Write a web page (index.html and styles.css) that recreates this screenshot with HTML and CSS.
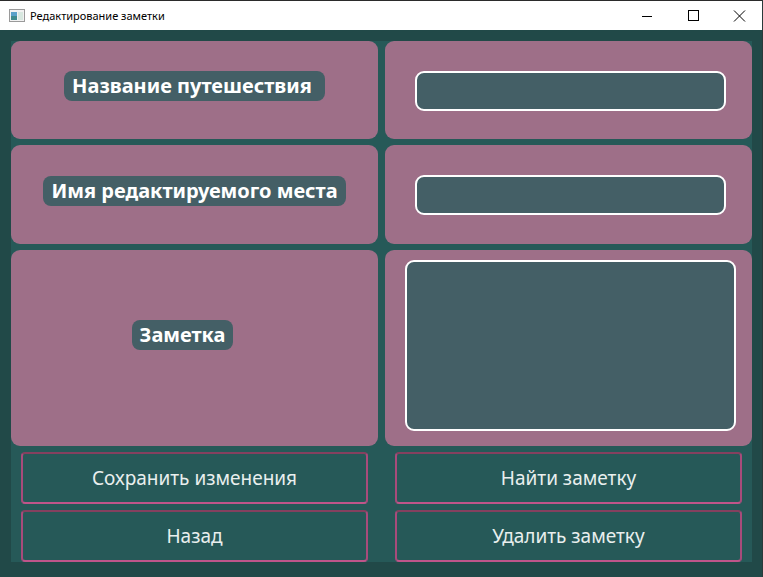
FILE: index.html
```html
<!DOCTYPE html>
<html lang="ru">
<head>
<meta charset="utf-8">
<title>Редактирование заметки</title>
<link rel="stylesheet" href="styles.css">
</head>
<body>
<div class="window">
  <header class="titlebar">
    <svg class="app-icon" width="16" height="13" viewBox="0 0 16 13">
      <rect x="0.5" y="0.5" width="15" height="12" fill="#f2f2f2" stroke="#9a9a9a"/>
      <rect x="2" y="3" width="6" height="8" fill="#3f8a8c"/>
      <rect x="2" y="3" width="6" height="4" fill="#5aa1c9"/>
      <rect x="9" y="3" width="5" height="8" fill="#d8e8e0"/>
    </svg>
    <span class="title">Редактирование заметки</span>
    <div class="controls">
      <svg class="ctl" width="46" height="29" viewBox="0 0 46 29"><path d="M18 15.5h10" stroke="#000" stroke-width="1"/></svg>
      <svg class="ctl" width="46" height="29" viewBox="0 0 46 29"><rect x="18.5" y="9.5" width="10" height="10" fill="none" stroke="#000" stroke-width="1"/></svg>
      <svg class="ctl" width="46" height="29" viewBox="0 0 46 29"><path d="M18 9.5l11 11M29 9.5l-11 11" stroke="#000" stroke-width="1"/></svg>
    </div>
  </header>
  <main class="frame">
    <div class="central">
      <div class="card card-label"><span class="label label-trail">Название путешествия</span></div>
      <div class="card card-field"><div class="field field-line"></div></div>
      <div class="card card-label"><span class="label">Имя редактируемого места</span></div>
      <div class="card card-field"><div class="field field-line"></div></div>
      <div class="card card-label card-note"><span class="label">Заметка</span></div>
      <div class="card card-area"><div class="field field-area"></div></div>
      <button class="btn">Сохранить изменения</button>
      <button class="btn">Найти заметку</button>
      <button class="btn">Назад</button>
      <button class="btn">Удалить заметку</button>
    </div>
  </main>
</div>
</body>
</html>
```
FILE: styles.css
```css
html, body {
  margin: 0;
  padding: 0;
  background: #214948;
}
.window {
  width: 763px;
  height: 577px;
  box-sizing: border-box;
  border-right: 1px solid #2a3a3a;
  display: flex;
  flex-direction: column;
  background: #214948;
}
.titlebar {
  height: 29px;
  flex: none;
  background: #ffffff;
  border-top: 1px solid #2b2b2b;
  display: flex;
  align-items: center;
  font-family: "Noto Sans", "Open Sans", sans-serif;
  font-size: 11px;
  color: #000;
}
.app-icon {
  margin-left: 9px;
}
.title {
  margin-left: 5px;
  margin-top: -1px;
}
.controls {
  margin-left: auto;
  display: flex;
  align-self: flex-start;
}
.ctl {
  display: block;
}
.frame {
  flex: 1;
  padding: 11px 10px 15px 11px;
}
.central {
  height: 521px;
  background: #265958;
  display: grid;
  grid-template-columns: 367px 367px;
  grid-template-rows: 98px 99px 196px 52px 52px;
  column-gap: 7px;
  row-gap: 6px;
}
.card {
  background: #9e6f88;
  border-radius: 9px;
  display: flex;
  box-sizing: border-box;
}
.card-label {
  justify-content: center;
  align-items: center;
  padding-bottom: 8px;
}
.card-note {
  padding-bottom: 26px;
  padding-right: 24px;
}
.label {
  background: #445f66;
  color: #ffffff;
  font-family: "Noto Sans", "DejaVu Sans", sans-serif;
  font-weight: bold;
  font-size: 20px;
  line-height: 30px;
  height: 30px;
  padding: 0 8px;
  border-radius: 8px;
  white-space: nowrap;
}
.label-trail {
  padding-right: 13px;
}
.field {
  background: #445f66;
  border: 2px solid #ffffff;
  border-radius: 9px;
  box-sizing: border-box;
}
.card-field {
  padding: 30px 26px 28px 30px;
}
.field-line {
  flex: 1;
  height: 40px;
}
.card-area {
  padding: 10px 16px 15px 20px;
}
.field-area {
  flex: 1;
}
.btn {
  margin: 0 10px;
  background: #265958;
  border: 2px solid #a84b7b;
  border-top-color: #85405f;
  border-bottom-color: #c0558a;
  border-radius: 4px;
  color: #e9efee;
  font-family: "Noto Sans", "DejaVu Sans", sans-serif;
  font-size: 19px;
  padding: 0;
  cursor: pointer;
}
```
